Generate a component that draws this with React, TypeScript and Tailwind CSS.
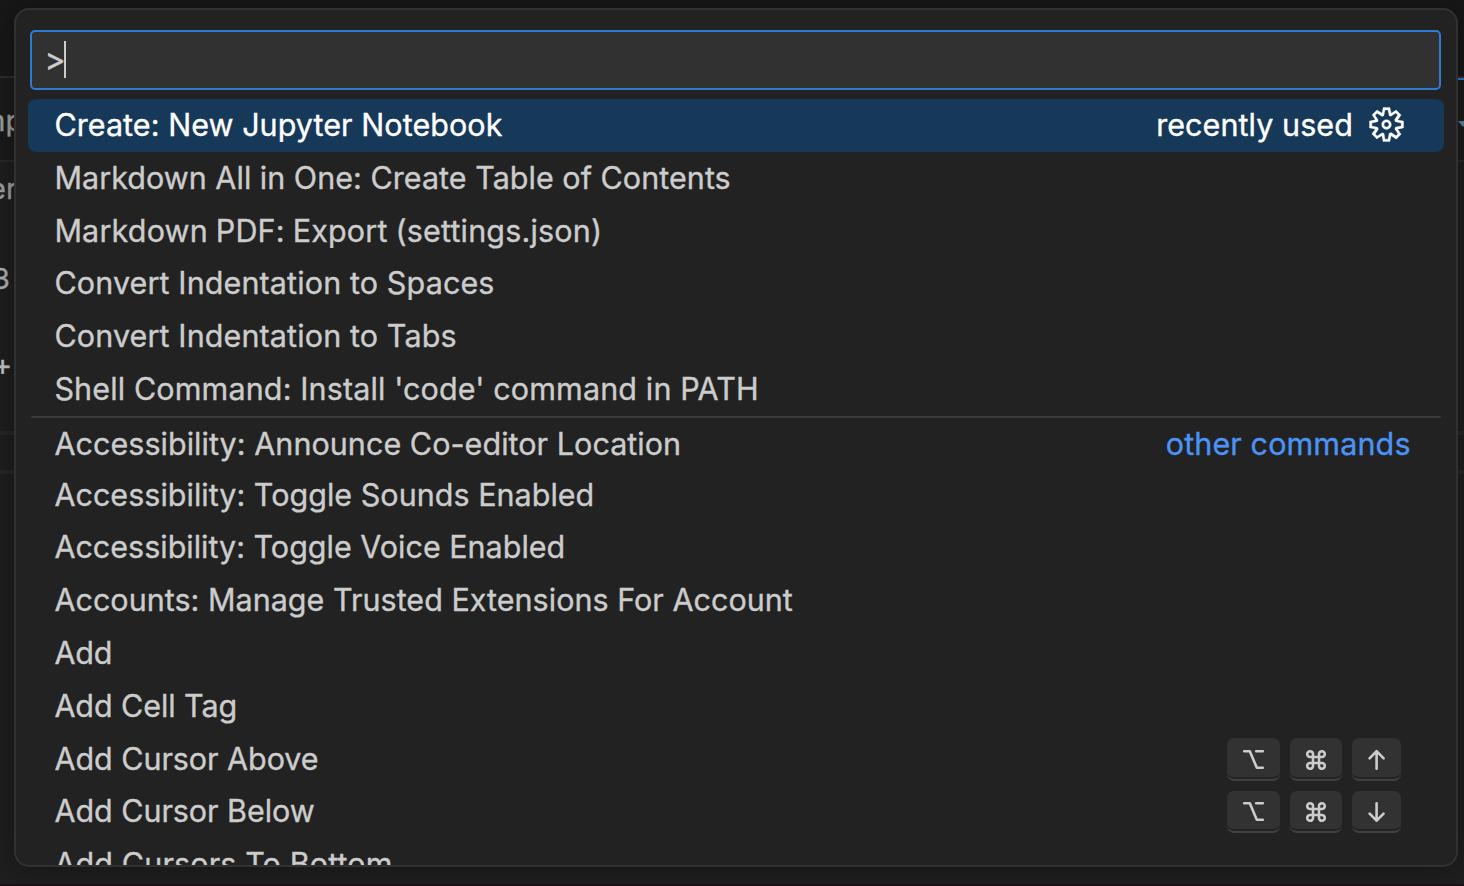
import { ReactNode } from "react";

type Command = {
  label: string;
  tracking: string;
  section?: string;
  keys?: "up" | "down";
};

const commands: Command[] = [
  { label: "Create: New Jupyter Notebook", tracking: "tracking-[0.06px]" },
  { label: "Markdown All in One: Create Table of Contents", tracking: "tracking-[0.045px] [word-spacing:-0.1px]" },
  { label: "Markdown PDF: Export (settings.json)", tracking: "tracking-[0.18px] [word-spacing:-0.9px]" },
  { label: "Convert Indentation to Spaces", tracking: "tracking-[0.12px]" },
  { label: "Convert Indentation to Tabs", tracking: "tracking-[0.12px]" },
  { label: "Shell Command: Install 'code' command in PATH", tracking: "tracking-[0.13px]" },
  { label: "Accessibility: Announce Co-editor Location", tracking: "tracking-[0.045px]", section: "other commands" },
  { label: "Accessibility: Toggle Sounds Enabled", tracking: "tracking-[0.02px]" },
  { label: "Accessibility: Toggle Voice Enabled", tracking: "tracking-[0px]" },
  { label: "Accounts: Manage Trusted Extensions For Account", tracking: "tracking-[0.02px]" },
  { label: "Add", tracking: "tracking-[-0.2px]" },
  { label: "Add Cell Tag", tracking: "tracking-[-0.08px]" },
  { label: "Add Cursor Above", tracking: "tracking-[-0.05px]", keys: "up" },
  { label: "Add Cursor Below", tracking: "tracking-[-0.05px]", keys: "down" },
  { label: "Add Cursors To Bottom", tracking: "tracking-[0.12px]" },
];

function Gear() {
  return (
    <svg
      viewBox="0 0 16 16"
      className="mb-px h-[39px] w-[39px] shrink-0"
      fill="currentColor"
      stroke="currentColor"
      strokeWidth="0.12"
      fillRule="evenodd"
    >
      <path d="M9.1 4.4L8.6 2H7.4l-.5 2.4-.7.3-2-1.3-.9.8 1.3 2-.2.7-2.4.5v1.2l2.4.5.3.8-1.3 2 .8.8 2-1.3.8.3.4 2.3h1.2l.5-2.4.8-.3 2 1.3.8-.8-1.3-2 .3-.8 2.3-.4V7.4l-2.4-.5-.3-.8 1.3-2-.8-.8-2 1.3-.7-.2zM9.4 1l.5 2.4L12 2.1l2 2-1.4 2.1 2.4.4v2.8l-2.4.5L14 12l-2 2-2.1-1.4-.5 2.4H6.6l-.5-2.4L4 13.9l-2-2 1.4-2.1L1 9.4V6.6l2.4-.5L2.1 4l2-2 2.1 1.4.4-2.4h2.8zm.6 7c0 1.1-.9 2-2 2s-2-.9-2-2 .9-2 2-2 2 .9 2 2zM8 9c.6 0 1-.4 1-1s-.4-1-1-1-1 .4-1 1 .4 1 1 1z" />
    </svg>
  );
}

function Key({ width, tall, children }: { width: string; tall: boolean; children: ReactNode }) {
  return (
    <span
      className={`flex items-center justify-center rounded-[7px] border-b-2 border-[#404040] bg-[#323232] pt-[3px] shadow-[inset_0_-2px_0_#232323] ${
        tall ? "mt-px h-[43px]" : "mt-[0.4px] h-[42px]"
      } ${width}`}
    >
      <svg
        viewBox="0 0 24 24"
        className="h-6 w-6"
        fill="none"
        stroke="#cccccc"
        strokeWidth="2.6"
        strokeLinecap="round"
        strokeLinejoin="round"
      >
        {children}
      </svg>
    </span>
  );
}

function Shortcut({ direction }: { direction: "up" | "down" }) {
  const tall = direction === "up";
  return (
    <div className="mr-[43px] flex gap-2.5">
      <Key width="w-[53px]" tall={tall}>
        <path d="M2.2 3.2h5.6l7 16.5h6M14.2 3.2h6.6" />
      </Key>
      <Key width="w-[52px]" tall={tall}>
        <path d="M9 9v6h6V9zM9 9H6.2A2.9 2.9 0 1 1 9 6.1zM15 9h2.8A2.9 2.9 0 1 0 15 6.1zM9 15H6.2A2.9 2.9 0 1 0 9 17.9zM15 15h2.8A2.9 2.9 0 1 1 15 17.9z" />
      </Key>
      <Key width="w-[49px]" tall={tall}>
        {tall ? <path d="M11.6 20.7V3.2M4.6 10.3l7-7.1 7 7.1" /> : <path d="M11.6 3.2v17.5M4.6 13.6l7 7.1 7-7.1" />}
      </Key>
    </div>
  );
}

function Row({ command, selected }: { command: Command; selected: boolean }) {
  return (
    <div
      className={`relative flex h-[52.8px] shrink-0 items-center justify-between rounded-lg pl-[26.4px] ${
        selected ? "bg-[#163859] text-white" : ""
      } ${command.section ? "pt-1" : ""}`}
    >
      {command.section && <div className="absolute top-0 right-[3px] left-[3px] h-0.5 rounded-full bg-[#3b3b3b]" />}
      <span className={`mb-[0.8px] whitespace-nowrap ${command.tracking}`}>{command.label}</span>
      {selected && (
        <div className="mr-[38px] flex items-center gap-[14px]">
          <span className="tracking-[0.08px]">recently used</span>
          <Gear />
        </div>
      )}
      {command.section && <span className="mr-[33.4px] tracking-[0.12px] text-[#4c93f5]">{command.section}</span>}
      {command.keys && <Shortcut direction={command.keys} />}
    </div>
  );
}

export default function App() {
  return (
    <div className="relative h-[886px] w-[1464px] overflow-hidden bg-[#1f1f1f] font-['Inter',sans-serif] text-[30.5px] leading-[40px] text-[#cccccc] [-webkit-text-stroke:0.35px]">
      <div className="flex h-full flex-col text-[29px] text-[#a3a3a3]">
        <div className="h-[76px] bg-[#181818]" />
        <div className="flex h-[84px] items-center justify-between border-t-2 border-[#2e2e2e] bg-[#1b1b1b]">
          <span className="-ml-[20px] pt-1">mp</span>
          <span className="h-full w-1.5 border-t-2 border-[#2f7bd3] pt-[41px]">
            <svg viewBox="0 0 10 6" className="h-[6px] w-[10px]" fill="#5488a2">
              <path d="M0 0h10L5 6z" />
            </svg>
          </span>
        </div>
        <div className="h-[56px] border-t-2 border-[#2a2a2a]">
          <span className="-ml-[11px] block pt-[7px]">er</span>
        </div>
        <div className="-ml-[8px] pt-[43px] text-[#b4b4b4]">3</div>
        <div className="-ml-[7px] pt-[46px] text-[#c8c8c8]">+</div>
        <div className="mt-[46px] h-[43px] border-y-4 border-[#272727]" />
      </div>
      <div className="absolute top-2 left-3.5 flex h-[859px] w-[1444px] flex-col overflow-hidden rounded-[15px] border-2 border-[#313131] bg-[#222222] px-3 pt-5 shadow-[0_0_32px_4px_rgba(0,0,0,0.3)]">
        <div className="mr-[1px] ml-0.5 flex h-[60px] w-[1411px] shrink-0 items-center rounded-[5px] border-2 border-[#2f7bd3] bg-[#313131] pl-[12.5px]">
          <span className="text-[32px]">&gt;</span>
          <span className="-ml-[1.8px] mb-0.5 h-[37px] w-0.5 bg-[#cccccc]" />
        </div>
        <div className="mt-[9px] flex w-[1416px] flex-col">
          {commands.map((command, index) => (
            <Row key={command.label} command={command} selected={index === 0} />
          ))}
        </div>
      </div>
      <div className="absolute inset-x-0 bottom-0 h-0.5 bg-[#1a1117]" />
    </div>
  );
}
